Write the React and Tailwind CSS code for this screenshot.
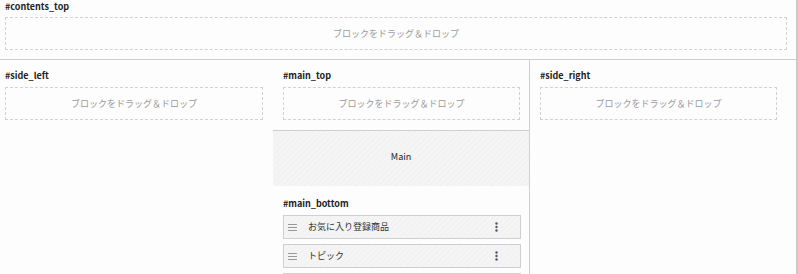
const font = { fontFamily: '"Noto Sans CJK JP", "Noto Sans", sans-serif' };

function Label({ children }) {
  return <p className="text-[9px] font-bold leading-[12px] text-[#222]">{children}</p>;
}

function DropZone() {
  return (
    <div className="h-[33px] border border-dashed border-[#d2d2d2] flex items-center justify-center text-[9px] text-[#9a9a9a]">
      ブロックをドラッグ＆ドロップ
    </div>
  );
}

function Hatch({ className, children }) {
  return (
    <div className={`bg-[repeating-linear-gradient(135deg,#f2f2f2_0px,#f2f2f2_2px,#f5f5f5_2px,#f5f5f5_4px)] ${className}`}>
      {children}
    </div>
  );
}

function Item({ title }) {
  return (
    <Hatch className="h-[24px] border border-[#cfcfcf] flex items-center pl-[4px] pr-[22px]">
      <svg width="9" height="8" viewBox="0 0 9 8" className="shrink-0">
        <rect x="0" y="1" width="9" height="1" fill="#999" />
        <rect x="0" y="4" width="9" height="1" fill="#999" />
        <rect x="0" y="7" width="9" height="1" fill="#999" />
      </svg>
      <span className="ml-[11px] text-[9px] text-[#333]">{title}</span>
      <svg width="3" height="10" viewBox="0 0 3 10" className="ml-auto">
        <circle cx="1.5" cy="1.5" r="1.2" fill="#556" />
        <circle cx="1.5" cy="5" r="1.2" fill="#556" />
        <circle cx="1.5" cy="8.5" r="1.2" fill="#556" />
      </svg>
    </Hatch>
  );
}

export default function App() {
  return (
    <div className="w-[798px] h-[274px] overflow-hidden bg-[#fdfdfd] border-r-2 border-[#c9c9c9]" style={font}>
      <div className="pl-[5px] pr-[9px] pt-[1px] pb-[9px] border-b border-[#cfcfcf]">
        <Label>#contents_top</Label>
        <div className="mt-[4px]">
          <DropZone />
        </div>
      </div>

      <div className="flex h-[214px]">
        <div className="w-[273px] pl-[5px] pr-[10px] pt-[10px]">
          <Label>#side_left</Label>
          <div className="mt-[5px]">
            <DropZone />
          </div>
        </div>

        <div className="w-[257px] border-r border-[#cfcfcf]">
          <div className="pl-[10px] pr-[9px] pt-[10px] pb-[10px] border-b border-[#cfcfcf]">
            <Label>#main_top</Label>
            <div className="mt-[5px]">
              <DropZone />
            </div>
          </div>
          <Hatch className="h-[55px] pb-[4px] flex items-center justify-center text-[9px] text-[#222]">
            Main
          </Hatch>
          <div className="pl-[10px] pr-[8px] pt-[12px]">
            <Label>#main_bottom</Label>
            <div className="mt-[5px] flex flex-col gap-[5px]">
              <Item title="お気に入り登録商品" />
              <Item title="トピック" />
              <Item title="" />
            </div>
          </div>
        </div>

        <div className="flex-1 pl-[10px] pr-[19px] pt-[10px]">
          <Label>#side_right</Label>
          <div className="mt-[5px]">
            <DropZone />
          </div>
        </div>
      </div>
    </div>
  );
}
